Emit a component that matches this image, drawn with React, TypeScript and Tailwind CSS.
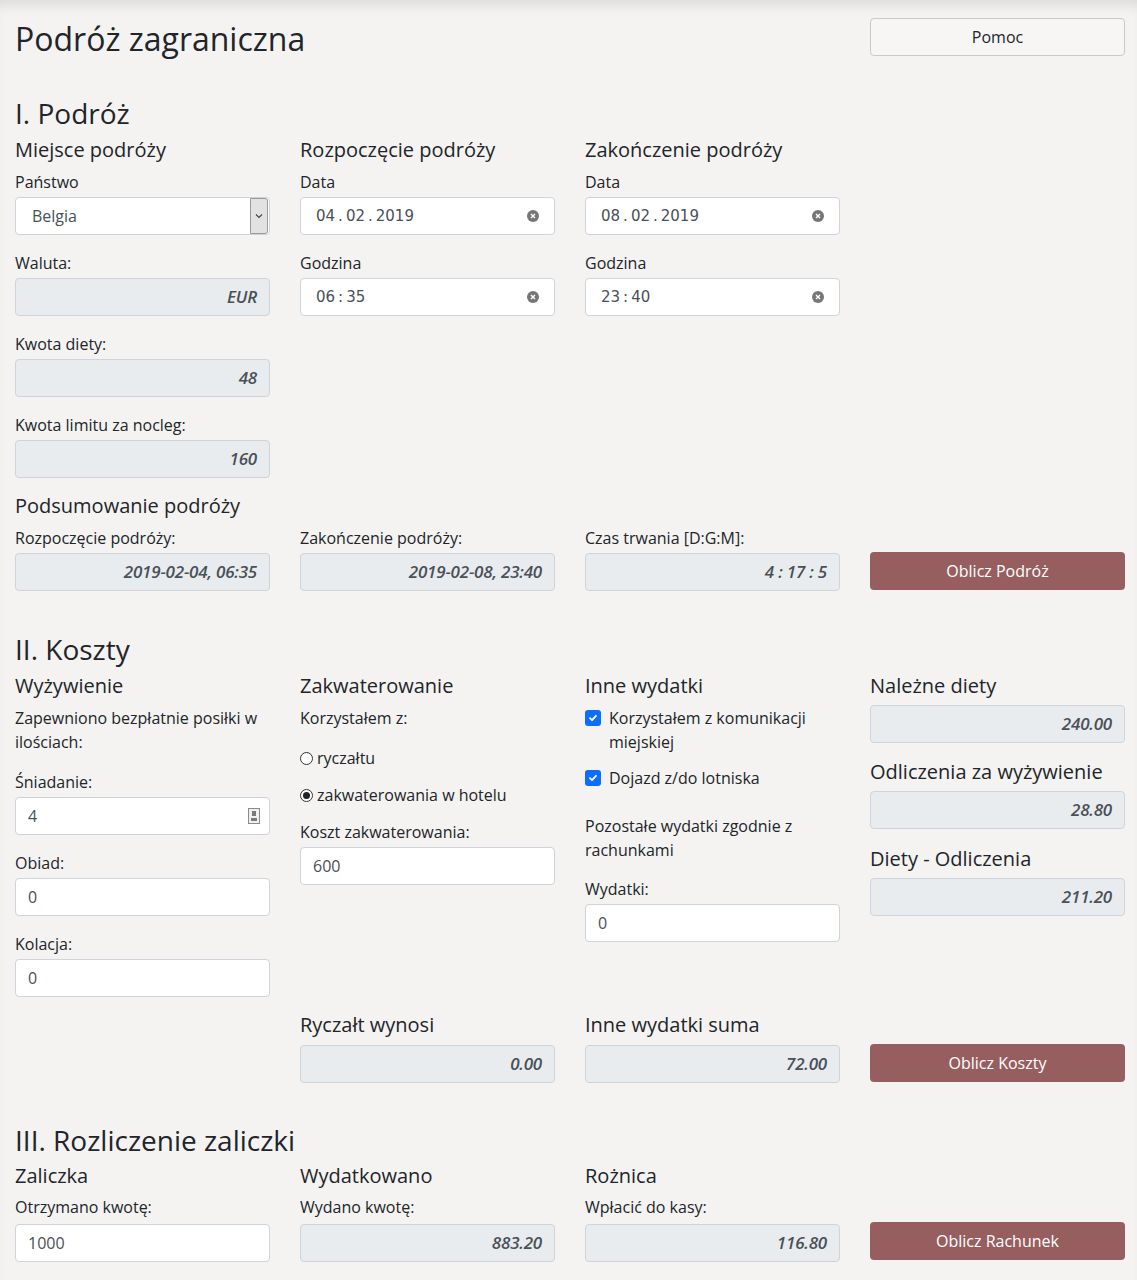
import { ReactNode } from 'react';

const H5 = ({ children, className = '' }: { children: ReactNode; className?: string }) => (
  <h5 className={`text-[20px] leading-6 mb-2 ${className}`}>{children}</h5>
);

const Label = ({ children, className = 'mb-[3px]' }: { children: ReactNode; className?: string }) => (
  <label className={`block text-base leading-6 ${className}`}>{children}</label>
);

const TextBox = ({ value, extra }: { value: string; extra?: ReactNode }) => (
  <div className="flex h-[38px] items-center justify-between rounded border border-[#ced4da] bg-white pl-3 pr-2 text-[#495057]">
    <span>{value}</span>
    {extra}
  </div>
);

const ReadOnly = ({ value, className = '' }: { value: string; className?: string }) => (
  <div
    className={`flex h-[38px] items-center justify-end rounded border border-[#ced4da] bg-[#e9ecef] pr-3 text-[17px] font-semibold italic tracking-[-0.2px] text-[#495057] ${className}`}
  >
    {value}
  </div>
);

const ClearIcon = () => (
  <svg width="12" height="12" viewBox="0 0 12 12" className="mr-[7px]">
    <circle cx="6" cy="6" r="6" fill="#767676" />
    <path d="M4 4l4 4M8 4l-4 4" stroke="#fff" strokeWidth="1.4" />
  </svg>
);

const DateBox = ({ parts, sep }: { parts: string[]; sep: string }) => (
  <div className="flex h-[38px] items-center justify-between rounded border border-[#ced4da] bg-white pl-[15px] pr-2 font-['DejaVu_Sans',sans-serif] text-[15px] text-[#495057]">
    <span className="flex">
      {parts.map((p, i) => (
        <span key={i} className="flex">
          {i > 0 && <span className="mx-[3px]">{sep}</span>}
          <span>{p}</span>
        </span>
      ))}
    </span>
    <ClearIcon />
  </div>
);

const Spinner = () => (
  <svg width="12" height="16" viewBox="0 0 12 16" className="mr-[1px]">
    <rect x="0.5" y="0.5" width="11" height="15" fill="#f0f0f0" stroke="#8a8a8a" />
    <path d="M4 3h4v5H4z M3 10h6v3H3z" fill="#7a7a7a" />
  </svg>
);

const Checkbox = () => (
  <span className="mt-1 mr-2 flex h-4 w-4 shrink-0 items-center justify-center rounded-[3px] bg-[#0b6efd]">
    <svg width="10" height="10" viewBox="0 0 10 10">
      <path d="M2 5.2l2 2 4-4.4" stroke="#fff" strokeWidth="1.8" fill="none" strokeLinecap="round" strokeLinejoin="round" />
    </svg>
  </span>
);

const Radio = ({ checked }: { checked?: boolean }) => (
  <span className="mr-[4px] flex h-[13px] w-[13px] items-center justify-center rounded-full border border-[#333] bg-white">
    {checked && <span className="h-[7px] w-[7px] rounded-full bg-[#222]" />}
  </span>
);

const ActionButton = ({ children }: { children: ReactNode }) => (
  <button className="h-[38px] w-full rounded bg-[#975e60] text-base text-white">{children}</button>
);

const App = () => {
  return (
    <div className="min-h-screen bg-[#f4f3f1] font-['Open_Sans',sans-serif] text-[#212529] shadow-[inset_0_12px_12px_-6px_rgba(0,0,0,0.09)]">
      <div className="px-[15px] pt-[18px] pb-[18px]">
        <div className="grid grid-cols-[repeat(4,255px)] items-start gap-x-[30px]">
          <h1 className="col-span-3 pt-[2px] text-[32px] leading-[38px]">Podróż zagraniczna</h1>
          <button className="h-[38px] rounded border border-[#c9c9c9] bg-[#f7f6f5] text-base">Pomoc</button>
        </div>

        {/* I. Podróż */}
        <h3 className="mt-[38px] mb-[8px] text-[28px] leading-[34px]">I. Podróż</h3>
        <div className="grid grid-cols-[repeat(4,255px)] gap-x-[30px]">
          <div>
            <H5>Miejsce podróży</H5>
            <Label>Państwo</Label>
            <div className="flex h-[38px] items-center rounded border border-[#ced4da] bg-white pl-4 text-[#495057]">
              <span className="flex-1">Belgia</span>
              <span className="mr-[1px] flex h-[36px] w-[18px] items-center justify-center rounded-r-[3px] border border-[#9a9a9a] bg-[#e2e2e2]">
                <svg width="8" height="6" viewBox="0 0 8 6">
                  <path d="M1 1.5l3 3 3-3" stroke="#444" strokeWidth="1.1" fill="none" />
                </svg>
              </span>
            </div>
            <Label className="mt-4 mb-[3px]">Waluta:</Label>
            <ReadOnly value="EUR" />
            <Label className="mt-4 mb-[3px]">Kwota diety:</Label>
            <ReadOnly value="48" />
            <Label className="mt-4 mb-[3px]">Kwota limitu za nocleg:</Label>
            <ReadOnly value="160" />
          </div>
          <div>
            <H5>Rozpoczęcie podróży</H5>
            <Label>Data</Label>
            <DateBox parts={['04', '02', '2019']} sep="." />
            <Label className="mt-4 mb-[3px]">Godzina</Label>
            <DateBox parts={['06', '35']} sep=":" />
          </div>
          <div>
            <H5>Zakończenie podróży</H5>
            <Label>Data</Label>
            <DateBox parts={['08', '02', '2019']} sep="." />
            <Label className="mt-4 mb-[3px]">Godzina</Label>
            <DateBox parts={['23', '40']} sep=":" />
          </div>
          <div />
        </div>

        <H5 className="mt-4">Podsumowanie podróży</H5>
        <div className="grid grid-cols-[repeat(4,255px)] items-end gap-x-[30px]">
          <div>
            <Label>Rozpoczęcie podróży:</Label>
            <ReadOnly value="2019-02-04, 06:35" />
          </div>
          <div>
            <Label>Zakończenie podróży:</Label>
            <ReadOnly value="2019-02-08, 23:40" />
          </div>
          <div>
            <Label>Czas trwania [D:G:M]:</Label>
            <ReadOnly value="4 : 17 : 5" />
          </div>
          <div className="mb-[1px]">
            <ActionButton>Oblicz Podróż</ActionButton>
          </div>
        </div>

        {/* II. Koszty */}
        <h3 className="mt-[41px] mb-[8px] text-[28px] leading-[34px]">II. Koszty</h3>
        <div className="grid grid-cols-[repeat(4,255px)] gap-x-[30px]">
          <div>
            <H5>Wyżywienie</H5>
            <p className="mb-4">Zapewniono bezpłatnie posiłki w ilościach:</p>
            <Label>Śniadanie:</Label>
            <TextBox value="4" extra={<Spinner />} />
            <Label className="mt-4 mb-[3px]">Obiad:</Label>
            <TextBox value="0" />
            <Label className="mt-4 mb-[3px]">Kolacja:</Label>
            <TextBox value="0" />
            <div className="h-4" />
          </div>
          <div>
            <H5>Zakwaterowanie</H5>
            <p className="mb-4">Korzystałem z:</p>
            <div className="flex items-center">
              <Radio />
              <span>ryczałtu</span>
            </div>
            <div className="mt-[13px] flex items-center">
              <Radio checked />
              <span>zakwaterowania w hotelu</span>
            </div>
            <Label className="mt-[13px] mb-[3px]">Koszt zakwaterowania:</Label>
            <TextBox value="600" />
          </div>
          <div>
            <H5>Inne wydatki</H5>
            <div className="flex">
              <Checkbox />
              <span>Korzystałem z komunikacji miejskiej</span>
            </div>
            <div className="mt-3 flex">
              <Checkbox />
              <span>Dojazd z/do lotniska</span>
            </div>
            <p className="mt-6 mb-[15px]">Pozostałe wydatki zgodnie z rachunkami</p>
            <Label>Wydatki:</Label>
            <TextBox value="0" />
          </div>
          <div>
            <H5 className="mb-[7px]">Należne diety</H5>
            <ReadOnly value="240.00" />
            <H5 className="mt-[17px] mb-[7px]">Odliczenia za wyżywienie</H5>
            <ReadOnly value="28.80" />
            <H5 className="mt-[18px] mb-[7px]">Diety - Odliczenia</H5>
            <ReadOnly value="211.20" />
          </div>
        </div>
        <div className="grid grid-cols-[repeat(4,255px)] items-end gap-x-[30px]">
          <div />
          <div>
            <H5>Ryczałt wynosi</H5>
            <ReadOnly value="0.00" />
          </div>
          <div>
            <H5>Inne wydatki suma</H5>
            <ReadOnly value="72.00" />
          </div>
          <div className="mb-[1px]">
            <ActionButton>Oblicz Koszty</ActionButton>
          </div>
        </div>

        {/* III. Rozliczenie zaliczki */}
        <h3 className="mt-[40px] mb-[7px] text-[28px] leading-[34px]">III. Rozliczenie zaliczki</h3>
        <div className="grid grid-cols-[repeat(4,255px)] items-end gap-x-[30px]">
          <div>
            <H5 className="mb-[7px]">Zaliczka</H5>
            <Label className="mb-[5px]">Otrzymano kwotę:</Label>
            <TextBox value="1000" />
          </div>
          <div>
            <H5 className="mb-[7px]">Wydatkowano</H5>
            <Label className="mb-[5px]">Wydano kwotę:</Label>
            <ReadOnly value="883.20" />
          </div>
          <div>
            <H5 className="mb-[7px]">Rożnica</H5>
            <Label className="mb-[5px]">Wpłacić do kasy:</Label>
            <ReadOnly value="116.80" />
          </div>
          <div className="mb-[2px]">
            <ActionButton>Oblicz Rachunek</ActionButton>
          </div>
        </div>
      </div>
    </div>
  );
};

export default App;
